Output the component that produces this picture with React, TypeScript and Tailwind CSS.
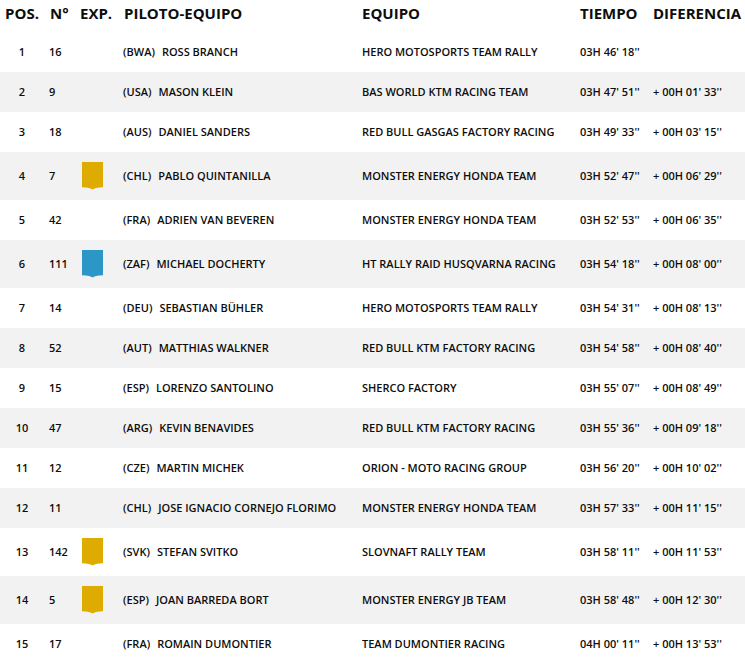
import React from "react";

type Row = {
  pos: number;
  num: string;
  exp?: "gold" | "blue";
  country: string;
  name: string;
  team: string;
  time: string;
  diff: string;
};

const rows: Row[] = [
  { pos: 1, num: "16", country: "BWA", name: "ROSS BRANCH", team: "HERO MOTOSPORTS TEAM RALLY", time: "03H 46' 18''", diff: "" },
  { pos: 2, num: "9", country: "USA", name: "MASON KLEIN", team: "BAS WORLD KTM RACING TEAM", time: "03H 47' 51''", diff: "+ 00H 01' 33''" },
  { pos: 3, num: "18", country: "AUS", name: "DANIEL SANDERS", team: "RED BULL GASGAS FACTORY RACING", time: "03H 49' 33''", diff: "+ 00H 03' 15''" },
  { pos: 4, num: "7", exp: "gold", country: "CHL", name: "PABLO QUINTANILLA", team: "MONSTER ENERGY HONDA TEAM", time: "03H 52' 47''", diff: "+ 00H 06' 29''" },
  { pos: 5, num: "42", country: "FRA", name: "ADRIEN VAN BEVEREN", team: "MONSTER ENERGY HONDA TEAM", time: "03H 52' 53''", diff: "+ 00H 06' 35''" },
  { pos: 6, num: "111", exp: "blue", country: "ZAF", name: "MICHAEL DOCHERTY", team: "HT RALLY RAID HUSQVARNA RACING", time: "03H 54' 18''", diff: "+ 00H 08' 00''" },
  { pos: 7, num: "14", country: "DEU", name: "SEBASTIAN BÜHLER", team: "HERO MOTOSPORTS TEAM RALLY", time: "03H 54' 31''", diff: "+ 00H 08' 13''" },
  { pos: 8, num: "52", country: "AUT", name: "MATTHIAS WALKNER", team: "RED BULL KTM FACTORY RACING", time: "03H 54' 58''", diff: "+ 00H 08' 40''" },
  { pos: 9, num: "15", country: "ESP", name: "LORENZO SANTOLINO", team: "SHERCO FACTORY", time: "03H 55' 07''", diff: "+ 00H 08' 49''" },
  { pos: 10, num: "47", country: "ARG", name: "KEVIN BENAVIDES", team: "RED BULL KTM FACTORY RACING", time: "03H 55' 36''", diff: "+ 00H 09' 18''" },
  { pos: 11, num: "12", country: "CZE", name: "MARTIN MICHEK", team: "ORION - MOTO RACING GROUP", time: "03H 56' 20''", diff: "+ 00H 10' 02''" },
  { pos: 12, num: "11", country: "CHL", name: "JOSE IGNACIO CORNEJO FLORIMO", team: "MONSTER ENERGY HONDA TEAM", time: "03H 57' 33''", diff: "+ 00H 11' 15''" },
  { pos: 13, num: "142", exp: "gold", country: "SVK", name: "STEFAN SVITKO", team: "SLOVNAFT RALLY TEAM", time: "03H 58' 11''", diff: "+ 00H 11' 53''" },
  { pos: 14, num: "5", exp: "gold", country: "ESP", name: "JOAN BARREDA BORT", team: "MONSTER ENERGY JB TEAM", time: "03H 58' 48''", diff: "+ 00H 12' 30''" },
  { pos: 15, num: "17", country: "FRA", name: "ROMAIN DUMONTIER", team: "TEAM DUMONTIER RACING", time: "04H 00' 11''", diff: "+ 00H 13' 53''" },
];

function Badge({ color }: { color: "gold" | "blue" }) {
  return (
    <svg width="21" height="28" viewBox="0 0 21 28" className="block">
      <path
        d="M0 0 H21 V25.2 Q12.5 25.6 10.5 27.6 Q8.5 25.6 0 25.2 Z"
        fill={color === "gold" ? "#deab00" : "#2c96c6"}
      />
    </svg>
  );
}

export default function App() {
  return (
    <div className="w-[745px] bg-white text-[#0d0d0d] font-['Open_Sans',sans-serif]">
      {/* header */}
      <div className="flex h-[32px] pt-[3px] text-[15px] font-bold leading-[20px] text-[#0d0d0d]">
        <div className="w-[44px] text-center">POS.</div>
        <div className="w-[36px] pl-[6px]">N°</div>
        <div className="w-[43px]">EXP.</div>
        <div className="w-[239px] pl-px">PILOTO-EQUIPO</div>
        <div className="w-[218px]">EQUIPO</div>
        <div className="w-[73px]">TIEMPO</div>
        <div className="flex-1 whitespace-nowrap">DIFERENCIA</div>
      </div>

      {rows.map((r, i) => (
        <div
          key={r.pos}
          className={
            "flex items-center text-[11px] font-semibold leading-[16px] " +
            (r.exp ? "h-[48px] " : "h-[40px] ") +
            (i % 2 === 1 ? "bg-[#f2f2f2]" : "bg-white")
          }
        >
          <div className="w-[44px] text-center">{r.pos}</div>
          <div className="w-[36px] pl-[5px]">{r.num}</div>
          <div className="w-[43px] pl-[2px]">{r.exp && <Badge color={r.exp} />}</div>
          <div className="w-[239px] whitespace-nowrap">
            <span className="mr-[7px]">({r.country})</span>
            {r.name}
          </div>
          <div className="w-[218px] whitespace-nowrap">{r.team}</div>
          <div className="w-[73px] whitespace-nowrap">{r.time}</div>
          <div className="flex-1 whitespace-nowrap">{r.diff}</div>
        </div>
      ))}
    </div>
  );
}
